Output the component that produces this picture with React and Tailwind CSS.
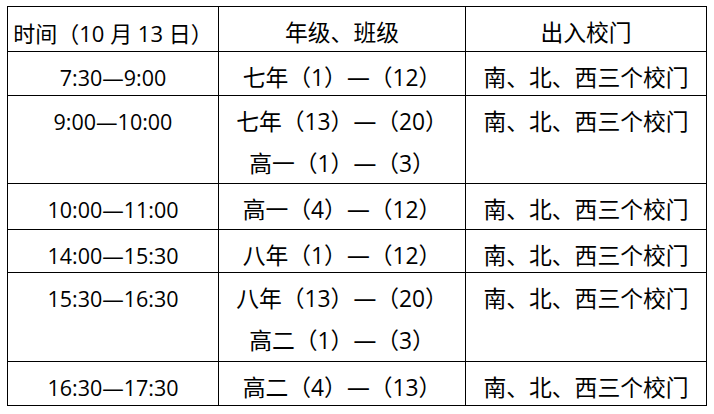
import React from "react";

const rows = [
  { time: "7:30—9:00", classes: ["七年（1）—（12）"], gate: "南、北、西三个校门" },
  { time: "9:00—10:00", classes: ["七年（13）—（20）", "高一（1）—（3）"], gate: "南、北、西三个校门" },
  { time: "10:00—11:00", classes: ["高一（4）—（12）"], gate: "南、北、西三个校门" },
  { time: "14:00—15:30", classes: ["八年（1）—（12）"], gate: "南、北、西三个校门" },
  { time: "15:30—16:30", classes: ["八年（13）—（20）", "高二（1）—（3）"], gate: "南、北、西三个校门" },
  { time: "16:30—17:30", classes: ["高二（4）—（13）"], gate: "南、北、西三个校门" },
];

const font = "font-['Open_Sans','Noto_Sans_CJK_SC',sans-serif]";

function Cell({ lines, size = "text-[22.8px]" }) {
  return (
    <div className={`flex flex-col items-center bg-white pt-[5px] text-black ${size} ${font}`}>
      {lines.map((l, i) => (
        <div key={i} className="whitespace-nowrap leading-[42px]">
          {l}
        </div>
      ))}
    </div>
  );
}

export default function App() {
  return (
    <div className="min-h-[414px] w-[714px] bg-white pl-[7px] pt-[6px]">
      <div className="grid w-[700px] grid-cols-[210px_246px_240px] grid-rows-[44px_43px_87px_45px_42px_88px_43px] gap-px bg-black p-px">
        <Cell lines={["时间（10 月 13 日）"]} size="text-[22px]" />
        <Cell lines={["年级、班级"]} />
        <Cell lines={["出入校门"]} />
        {rows.map((r) => (
          <React.Fragment key={r.time}>
            <Cell lines={[r.time]} size="text-[21.5px]" />
            <Cell lines={r.classes} />
            <Cell lines={[r.gate]} />
          </React.Fragment>
        ))}
      </div>
    </div>
  );
}
